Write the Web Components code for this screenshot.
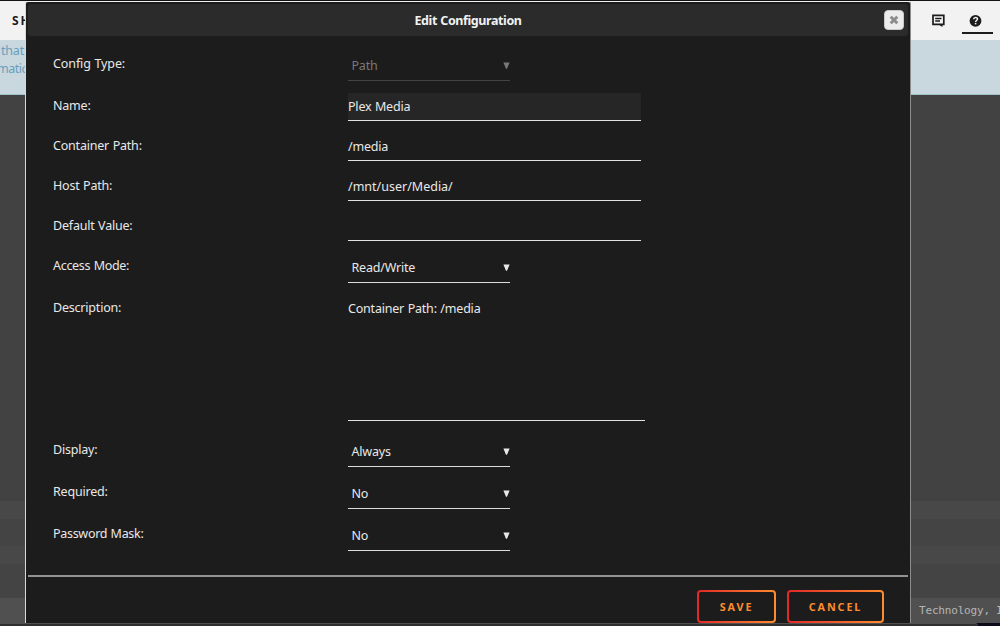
<!DOCTYPE html>
<html lang="en">
<head>
<meta charset="utf-8">
<title>Edit Configuration</title>
<style>
    html, body{
        margin: 0;
        height: 100%;
        overflow: hidden;
    }
    body{
        font: 12.5px/18px "Noto Sans", "Open Sans", sans-serif;
        letter-spacing: -0.2px;
        word-spacing: 0.5px;
        background: #454545;
    }
</style>
</head>
<body>
<docker-page>
    <config-dialog slot="dialog" heading="Edit Configuration">
        <config-row label="Config Type:" style="--track: -0.1px"><select-box disabled>Path</select-box></config-row>
        <config-row label="Name:" style="--row: 40px"><text-box active>Plex Media</text-box></config-row>
        <config-row label="Container Path:" style="--row: 40px"><text-box>/media</text-box></config-row>
        <config-row label="Host Path:" style="--row: 40px"><text-box style="letter-spacing: 0">/mnt/user/Media/</text-box></config-row>
        <config-row label="Default Value:" style="--row: 40px"><text-box></text-box></config-row>
        <config-row label="Access Mode:" style="--row: 42px; --track: -0.3px"><select-box>Read/Write</select-box></config-row>
        <config-row label="Description:" style="--row: 142px"><text-box multiline>Container Path: /media</text-box></config-row>
        <config-row label="Display:"><select-box>Always</select-box></config-row>
        <config-row label="Required:"><select-box>No</select-box></config-row>
        <config-row label="Password Mask:" style="--track: -0.3px"><select-box>No</select-box></config-row>
        <outline-button slot="actions" style="width: 79px">SAVE</outline-button>
        <outline-button slot="actions" style="width: 97px">CANCEL</outline-button>
    </config-dialog>
</docker-page>

<script>
class BaseElement extends HTMLElement{
    constructor() {
        super();
        this.attachShadow({ mode: "open" }).innerHTML = this.constructor.shadowDom;
    }
}

class DockerPage extends BaseElement{
    static shadowDom=/*html*/`
        <style>
            :host{
                display: flex;
                flex-direction: column;
                height: 626px;
                position: relative;
                overflow: hidden;
                box-sizing: border-box;
                border-top: 1px solid #151218;
            }
            header{
                flex: 0 0 39px;
                display: flex;
                justify-content: space-between;
                background: #f2f2f2;
                color: #1c1c1c;
            }
            .nav{
                padding: 11px 0 0 12px;
                font-size: 12px;
                font-weight: 700;
                letter-spacing: 2px;
            }
            .tools{
                display: flex;
                gap: 17px;
                padding-right: 7px;
            }
            .tools div{
                display: flex;
                justify-content: center;
                box-sizing: border-box;
                height: 33px;
                padding-top: 13px;
            }
            .tools .current{
                width: 31px;
                padding-right: 5px;
                border-bottom: 2px solid #1c1c1c;
            }
            .notice{
                flex: 0 0 54px;
                background: #c9d8df;
                border-bottom: 1px solid #9fc4ca;
                color: #6a9fbc;
                box-sizing: content-box;
                white-space: nowrap;
            }
            .notice p{
                margin: 0;
                padding-left: 1px;
            }
            .notice p:first-child{
                padding-top: 2px;
            }
            .notice p + p{
                margin-left: -4px;
                letter-spacing: -0.5px;
            }
            main{
                flex: 1;
                background: linear-gradient(#424242 0 406px, #484848 406px 424px, #444 424px 451px, #484848 451px 469px, #444 469px);
            }
            footer{
                flex: 0 0 25px;
                background: #505050;
                color: #b5b5b5;
                font: 11px/25px "DejaVu Sans Mono", monospace;
                letter-spacing: -0.18px;
                word-spacing: 0;
                padding-left: 919px;
                white-space: nowrap;
            }
            .edge{
                flex: 0 0 3px;
                display: flex;
                background: #0b0b1c;
                position: relative;
                z-index: 2;
            }
            .edge div{
                width: 978px;
                box-sizing: border-box;
                background: #303032;
                border-top: 1px solid #505050;
                border-top-right-radius: 3px;
            }
            slot{
                position: absolute;
                display: block;
                left: 25px;
                top: 0;
                z-index: 1;
            }
        </style>
        <header>
            <div class="nav">SH</div>
            <div class="tools">
                <div>
                    <svg width="13" height="13" viewBox="0 0 13 13" fill="none" stroke="#1c1c1c">
                        <path d="M1 1.4h10.8v9H1z" stroke-width="1.7"/>
                        <path d="M3.2 4.5h6.3M3.2 7h4.8" stroke-width="1.3"/>
                        <path d="M6.5 10.5h4V13z" fill="#1c1c1c" stroke="none"/>
                    </svg>
                </div>
                <div class="current">
                    <svg width="13" height="13" viewBox="0 0 13 13">
                        <circle cx="6.5" cy="6.8" r="5.9" fill="#1c1c1c"/>
                        <path d="M4.6 5.3c.2-2.3 3.9-2.3 3.9-.2 0 1.4-1.9 1.4-1.9 2.8" fill="none" stroke="#f2f2f2" stroke-width="1.5"/>
                        <path d="M5.8 8.9h1.6v1.5H5.8z" fill="#f2f2f2"/>
                    </svg>
                </div>
            </div>
        </header>
        <div class="notice"><p>that</p><p>matic</p></div>
        <main></main>
        <footer>Technology, I</footer>
        <div class="edge"><div></div></div>
        <slot name="dialog"></slot>
    `
}

class ConfigDialog extends BaseElement{
    static observedAttributes = ["heading"];
    static shadowDom=/*html*/`
        <style>
            :host{
                display: flex;
                flex-direction: column;
                box-sizing: border-box;
                width: 886px;
                height: 625px;
                padding: 3px 2px 0;
                background: #1c1c1c;
                border: 1px solid #d8d8d8;
                border-right-color: #8c8c8c;
                border-top-color: #f2f2f2;
                border-radius: 3px;
                color: #e8e8e8;
            }
            .title{
                flex: 0 0 32px;
                display: grid;
                grid-template-columns: 1fr auto 1fr;
                align-items: center;
                margin-top: -1px;
                background: #2b2b2b;
                border-radius: 3px;
            }
            h1{
                grid-column: 2;
                margin: 0;
                padding-top: 2px;
                font-size: 12.5px;
                line-height: 18px;
                letter-spacing: -0.4px;
                color: #f2f2f2;
            }
            button{
                justify-self: end;
                display: flex;
                align-items: center;
                justify-content: center;
                width: 20px;
                height: 20px;
                margin-right: 4px;
                padding: 0;
                border: 1px solid #c8c8c8;
                border-radius: 4px;
                background: #ececec;
            }
            .fields{
                flex: 0 0 527px;
                padding: 12px 0 0 25px;
                box-sizing: content-box;
            }
            .actions{
                flex: 1;
                display: flex;
                justify-content: flex-end;
                align-items: flex-start;
                gap: 11px;
                padding: 13px 24px 0 0;
                border-top: 2px solid #929292;
            }
        </style>
        <div class="title">
            <h1></h1>
            <button aria-label="Close">
                <svg width="10" height="10" viewBox="0 0 10 10">
                    <path d="M1.7 1.7l6.6 6.6M8.3 1.7L1.7 8.3" stroke="#8c8c8c" stroke-width="3"/>
                </svg>
            </button>
        </div>
        <div class="fields"><slot></slot></div>
        <div class="actions"><slot name="actions"></slot></div>
    `

    attributeChangedCallback(name, oldValue, newValue) {
        this.shadowRoot.querySelector("h1").textContent = newValue;
    }
}

class ConfigRow extends BaseElement{
    static observedAttributes = ["label"];
    static shadowDom=/*html*/`
        <style>
            :host{
                display: grid;
                grid-template-columns: 295px 1fr;
                height: var(--row, 42px);
            }
            label{
                padding-top: 7px;
                letter-spacing: var(--track, -0.2px);
            }
        </style>
        <label></label>
        <slot></slot>
    `

    attributeChangedCallback(name, oldValue, newValue) {
        this.shadowRoot.querySelector("label").textContent = newValue;
    }
}

class TextBox extends BaseElement{
    static shadowDom=/*html*/`
        <style>
            :host{
                display: block;
                box-sizing: border-box;
                width: 293px;
                height: 28px;
                margin-top: 3px;
                padding-top: 5px;
                border-bottom: 1px solid #e2e2e2;
            }
            :host([active]){
                background: #262626;
            }
            :host([multiline]){
                width: 297px;
                height: 126px;
            }
        </style>
        <slot></slot>
    `
}

class SelectBox extends BaseElement{
    static shadowDom=/*html*/`
        <style>
            :host{
                display: flex;
                justify-content: space-between;
                box-sizing: border-box;
                width: 162px;
                height: 30px;
                margin-top: 3px;
                padding: 6px 0 0 3.5px;
                border-bottom: 1px solid #dcdcdc;
            }
            :host([disabled]){
                color: #787878;
                border-color: #444;
            }
            svg{
                margin-top: 5px;
                fill: currentColor;
            }
        </style>
        <slot></slot>
        <svg width="7" height="7" viewBox="0 0 7 7"><path d="M.4.5h6.2L4 6.8H3z"/></svg>
    `
}

class OutlineButton extends BaseElement{
    static shadowDom=/*html*/`
        <style>
            :host{
                display: block;
            }
            button{
                display: block;
                width: 100%;
                height: 33px;
                padding: 0;
                border: 2px solid transparent;
                border-radius: 4px;
                background: linear-gradient(#1c1c1c, #1c1c1c) padding-box, linear-gradient(90deg, #e22828, #ff8c2f) border-box;
                color: #ff8c2f;
                font: 700 10.8px/18px "Noto Sans", sans-serif;
                letter-spacing: 1.9px;
            }
        </style>
        <button><slot></slot></button>
    `
}

customElements.define("docker-page", DockerPage);
customElements.define("config-dialog", ConfigDialog);
customElements.define("config-row", ConfigRow);
customElements.define("text-box", TextBox);
customElements.define("select-box", SelectBox);
customElements.define("outline-button", OutlineButton);
</script>
</body>
</html>
